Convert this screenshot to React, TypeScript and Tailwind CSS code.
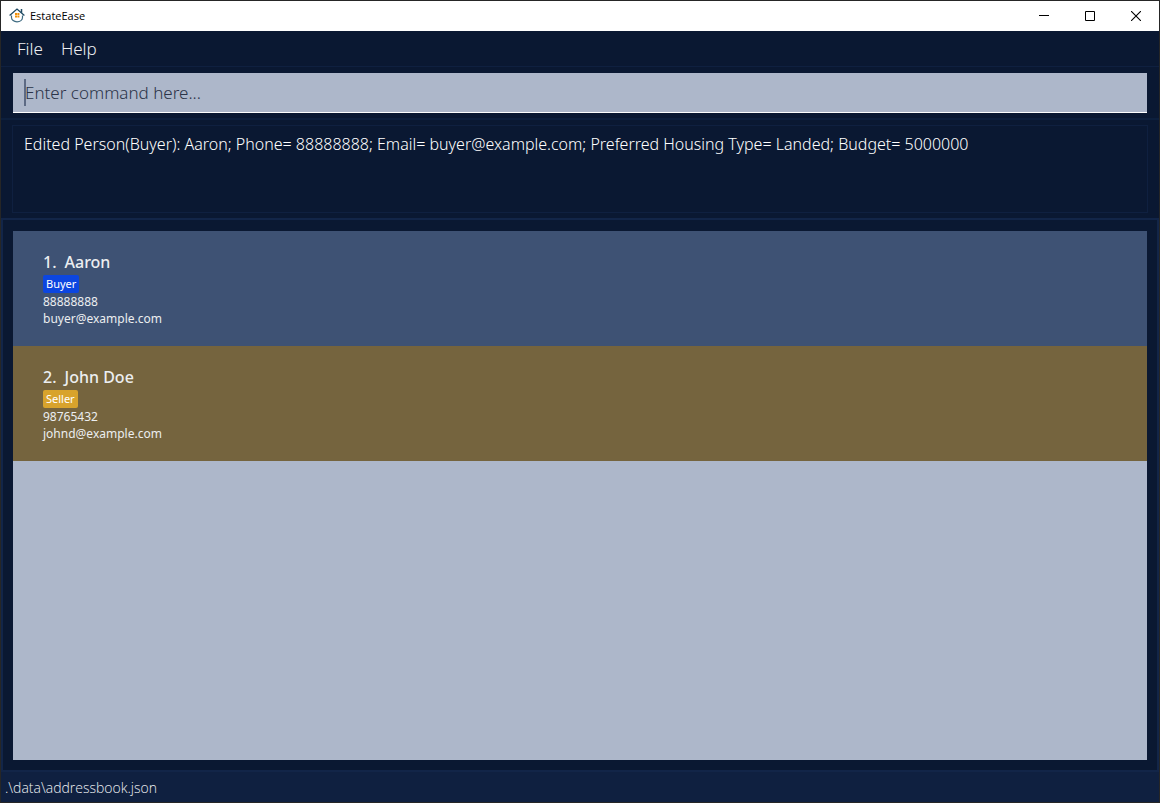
import React from "react";

type Person = {
  name: string;
  role: "Buyer" | "Seller";
  phone: string;
  email: string;
};

const people: Person[] = [
  { name: "Aaron", role: "Buyer", phone: "88888888", email: "buyer@example.com" },
  { name: "John Doe", role: "Seller", phone: "98765432", email: "johnd@example.com" },
];

const cardColour = { Buyer: "bg-[#3e5274]", Seller: "bg-[#75643e]" };
const tagColour = { Buyer: "bg-[#0c46e0]", Seller: "bg-[#d8a32c]" };

function HouseLogo() {
  return (
    <svg width="16" height="16" viewBox="0 0 16 16" fill="none" aria-hidden="true">
      <path d="M0.6 7.6 8 1.1l7.4 6.5" stroke="#1f4a63" strokeWidth="1.3" />
      <path d="M12.5 4.8V1" stroke="#1f4a63" strokeWidth="1.5" />
      <path d="M2.5 7.6v2c0 2.4 2.4 4.2 5.5 4.2s5.5-1.8 5.5-4.2v-2" stroke="#3d6a80" strokeWidth="1.2" />
      <path d="M6 5h2v2H6zM8.4 5h2v2h-2zM6 7.5h2v2H6zM8.4 7.5h2v2h-2z" fill="#f09008" />
    </svg>
  );
}

function TitleBar() {
  const button = "flex h-[30px] w-[46px] items-center justify-center hover:bg-gray-200";
  return (
    <header className="flex h-[30px] items-center bg-white text-black">
      <div className="flex flex-1 items-center gap-[5px] pl-2">
        <HouseLogo />
        <h1 className="font-['Open_Sans',sans-serif] text-[11px] leading-4 font-normal">EstateEase</h1>
      </div>
      <button type="button" aria-label="Minimize" className={button}>
        <svg width="10" height="10" viewBox="0 0 10 10" shapeRendering="crispEdges" aria-hidden="true">
          <path d="M0 4h10v1H0z" fill="#000" />
        </svg>
      </button>
      <button type="button" aria-label="Maximize" className={button}>
        <svg width="10" height="10" viewBox="0 0 10 10" aria-hidden="true">
          <path d="M.5.5h9v9h-9z" fill="none" stroke="#000" />
        </svg>
      </button>
      <button type="button" aria-label="Close" className={button}>
        <svg width="10" height="10" viewBox="0 0 10 10" aria-hidden="true">
          <path d="M0 0l10 10M10 0 0 10" stroke="#000" strokeWidth="1.1" />
        </svg>
      </button>
    </header>
  );
}

function PersonCard({ person, index }: { person: Person; index: number }) {
  return (
    <li className={`h-[115px] px-[30px] pt-5 text-[#eceef0] ${cardColour[person.role]}`}>
      <h2 className="flex gap-2 text-[16px] leading-[22px] font-medium">
        <span>{index}.</span>
        <span>{person.name}</span>
      </h2>
      <div className="flex pt-[2px]">
        <span className={`rounded-[2px] px-[3px] text-[11px] leading-[18px] text-white ${tagColour[person.role]}`}>
          {person.role}
        </span>
      </div>
      <p className="text-[12px] leading-[17px]">{person.phone}</p>
      <p className="text-[12px] leading-[17px]">{person.email}</p>
    </li>
  );
}

export default function App() {
  return (
    <div className="flex min-h-screen flex-col border border-[#262626] bg-[#0a1832] font-['Noto_Sans',sans-serif]">
      <TitleBar />
      <nav className="flex h-9 items-center gap-[18px] border-b border-[#0f2040] px-4 text-[17px] leading-6 font-light text-[#eef0f3]">
        <button type="button">File</button>
        <button type="button">Help</button>
      </nav>
      <section className="border-b-2 border-[#0d1f3d] px-3 pt-[6px] pb-[5px]">
        <div className="relative">
          <input
            type="text"
            aria-label="Command"
            placeholder="Enter command here..."
            className="block h-10 w-full border-b border-white bg-[#adb7ca] px-3 text-[17px] font-light text-[#2b3448] outline-none placeholder:text-[#2b3448]"
          />
          <span className="absolute top-[6px] left-[11px] h-[27px] w-[2px] bg-[#5d6a84]" />
        </div>
      </section>
      <section className="border-b-2 border-[#122548] px-[11px] pt-[5px] pb-[5px]">
        <output className="block h-[88px] border border-[#0f2040] px-[11px] pt-[6px] text-[16px] leading-6 font-light text-white">
          Edited Person(Buyer): Aaron; Phone= 88888888; Email= buyer@example.com; Preferred Housing Type= Landed; Budget= 5000000
        </output>
      </section>
      <main className="flex flex-1 flex-col border-x-2 border-b-2 border-[#122548] px-[10px] pt-[11px] pb-[10px]">
        <ol className="flex-1 bg-[#adb7ca]">
          {people.map((person, i) => (
            <PersonCard key={person.phone} person={person} index={i + 1} />
          ))}
        </ol>
      </main>
      <footer className="h-[30px] bg-[#0f2040] px-1 font-['Open_Sans',sans-serif] text-[14px] leading-8 font-light text-[#eef0f3]">
        .\data\addressbook.json
      </footer>
    </div>
  );
}
